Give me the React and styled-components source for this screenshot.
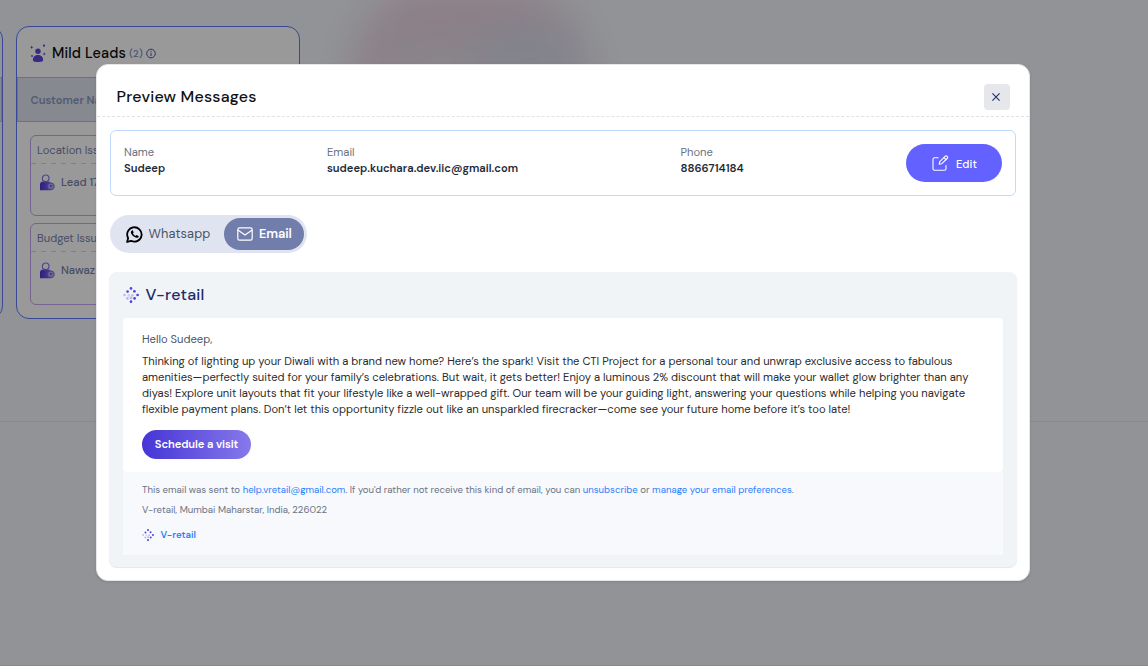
import React from "react";
import styled, { createGlobalStyle } from "styled-components";

const Global = createGlobalStyle`
  *, *::before, *::after { box-sizing: border-box; }
  body { margin: 0; background: #f3f6fb; font-family: "DM Sans", Inter, sans-serif; overflow: hidden; }
`;

/* ---------- page behind the dialog ---------- */
const Page = styled.div`
  position: relative;
  height: 666px;
  overflow: hidden;
  background: #f3f6fb;
`;
const Board = styled.section`
  display: flex;
  align-items: flex-start;
  gap: 13px;
  height: 422px;
  padding-top: 26px;
  border-bottom: 1px solid #e1e4e9;
`;
const Summary = styled.section`
  height: 244px;
  border-bottom: 1px solid #e1e4e9;
`;
const Column = styled.article`
  flex: none;
  width: 284px;
  height: 293px;
  margin-left: ${(p) => (p.$scrolled ? "-281px" : "0")};
  border: 1px solid #5f78ff;
  border-radius: 13px;
  background: ${(p) => (p.$scrolled ? "#f3f6fb" : "#fff")};
  overflow: hidden;
`;
const ColumnTitle = styled.h2`
  display: flex;
  align-items: center;
  height: 50px;
  margin: 0;
  padding: 2px 0 0 13px;
  font-size: 14.4px;
  font-weight: 500;
  letter-spacing: 0.17px;
  color: #0c0c0e;
`;
const TitleText = styled.span`
  margin: 0 3px 0 5px;
`;
const Count = styled.span`
  margin-right: 3px;
  padding-top: 1px;
  font-size: 9.6px;
  font-weight: 500;
  letter-spacing: 0.3px;
  color: #7484bd;
`;
const ColumnHead = styled.div`
  display: flex;
  align-items: center;
  height: 45px;
  padding-left: 12.5px;
  border: 1px solid #b4bddf;
  background: #dfe7f1;
  font-size: 11.2px;
  font-weight: 600;
  color: #8b95c4;
`;
const Issues = styled.div`
  display: flex;
  flex-direction: column;
  gap: 7px;
  padding: 13px;
`;
const Issue = styled.div`
  height: ${(p) => p.$height}px;
  border: 1px solid #caa2f0;
  border-radius: 6px;
  font-size: 11.2px;
  color: #7781aa;
`;
const IssueName = styled.div`
  height: 28px;
  padding-left: 6px;
  line-height: 29px;
  background: repeating-linear-gradient(90deg, #d3d5dc 0 5px, transparent 5px 10px) bottom / 100% 1px no-repeat;
`;
const Lead = styled.div`
  display: flex;
  align-items: center;
  gap: 6px;
  height: 36px;
  padding-left: 8px;
  font-weight: 500;
`;
const Glow = styled.div`
  position: absolute;
  left: 348px;
  top: -10px;
  width: 244px;
  height: 200px;
  border-radius: 84px;
  filter: blur(18px);
  background:
    radial-gradient(circle at 74% 40%, #d3deec 0, transparent 36%),
    radial-gradient(circle at 38% 44%, #e3e3e6 0, transparent 32%),
    linear-gradient(180deg, #f0c9d8 0, #e6d8e6 24%, #ebdae0 60%);
`;
const Backdrop = styled.div`
  position: absolute;
  inset: 0;
  display: flex;
  justify-content: center;
  align-items: flex-start;
  padding: 64px 22px 0 0;
  background: rgba(0, 0, 0, 0.4);
`;

/* ---------- dialog ---------- */
const Dialog = styled.div`
  width: 934px;
  height: 517px;
  border: 1px solid #e5e7eb;
  border-radius: 12px;
  background: #fff;
  overflow: hidden;
  box-shadow: 0 1px 3px rgba(0, 0, 0, 0.1);
`;
const DialogHead = styled.header`
  display: flex;
  justify-content: space-between;
  height: 52px;
  padding: 19px 19px 0 19.5px;
  border-bottom: 1px dashed #e0e2e6;
`;
const DialogTitle = styled.h1`
  margin: 0;
  font-size: 16px;
  font-weight: 500;
  line-height: 26px;
  letter-spacing: 0.21px;
  color: #101114;
`;
const CloseButton = styled.button`
  display: grid;
  place-items: center;
  width: 26px;
  height: 26px;
  padding: 0 2px 1px 0;
  border: 0;
  border-radius: 4px;
  background: #e5e7eb;
  color: #27326f;
`;
const DialogBody = styled.div`
  padding: 13px 12px 0;
`;
const Contact = styled.div`
  display: grid;
  grid-template-columns: 203px 353.5px 1fr auto;
  height: 66px;
  margin: 0 1px;
  padding: 13px;
  border: 1px solid #bedbff;
  border-radius: 6px;
`;
const Field = styled.div`
  font-size: 11.2px;
  line-height: 16px;
  color: #6a7282;
`;
const Value = styled.div`
  font-weight: 600;
  color: #1e2939;
`;
const EditButton = styled.button`
  display: flex;
  align-items: center;
  justify-content: center;
  gap: 7px;
  width: 96px;
  height: 38px;
  padding: 0 0 0 1px;
  border: 0;
  border-radius: 19px;
  background: #6361ff;
  font: 500 11.2px/18px "DM Sans", Inter, sans-serif;
  letter-spacing: 0.1px;
  color: #fff;
`;
const EditLabel = styled.span`
  padding-top: 2px;
`;
const Tabs = styled.div`
  display: flex;
  width: 197px;
  height: 38px;
  margin: 19px 1px;
  padding: 3px;
  border-radius: 19px;
  background: #e0e4f0;
`;
const Tab = styled.button`
  display: flex;
  align-items: center;
  gap: ${(p) => (p.$active ? "6.5px" : "6px")};
  width: ${(p) => (p.$active ? "80px" : "111px")};
  height: 32px;
  padding: 0 0 0 12.5px;
  border: 0;
  border-radius: 16px;
  background: ${(p) => (p.$active ? "#717daa" : "transparent")};
  font: ${(p) => (p.$active ? 600 : 400)} 12.8px/20px "DM Sans", Inter, sans-serif;
  letter-spacing: ${(p) => (p.$active ? "-0.1px" : "0.13px")};
  color: ${(p) => (p.$active ? "#fff" : "#4a5565")};
`;
const Mail = styled.div`
  height: 295px;
  padding: 0 14px;
  border-radius: 8px;
  background: #f0f4f7;
  box-shadow: 0 1px 1px rgba(0, 0, 0, 0.1);
`;
const Brand = styled.div`
  display: flex;
  align-items: center;
  gap: 6.5px;
  height: 46px;
  font-size: 16px;
  font-weight: 500;
  line-height: 20px;
  letter-spacing: 0.24px;
  color: #1f2a68;
`;
const BrandName = styled.span`
  padding-bottom: 1px;
`;
const Message = styled.div`
  height: 154px;
  padding: 13px 19px;
  border-radius: 4px;
  background: #fff;
  font-size: 11.2px;
  line-height: 16px;
`;
const Greeting = styled.p`
  margin: 0 0 6px;
  color: #4a5565;
`;
const Paragraph = styled.p`
  margin: 0;
  letter-spacing: 0.007px;
  color: #2b2b2d;
`;
const VisitButton = styled.button`
  display: block;
  width: 109px;
  height: 29px;
  margin-top: 13px;
  padding: 0 0 1px;
  border: 0;
  border-radius: 15px;
  background: linear-gradient(90deg, #4535d6, #8679ea);
  font: 600 11.2px/16px "DM Sans", Inter, sans-serif;
  letter-spacing: -0.09px;
  color: #fff;
`;
const MailFooter = styled.footer`
  display: flex;
  flex-direction: column;
  height: 83px;
  padding: 10px 19px 0;
  background: #f7f9fd;
  font-size: 9.6px;
  line-height: 16px;
  color: #6a7282;
`;
const FooterText = styled.p`
  margin: 0 0 4px;
  letter-spacing: 0.007px;
`;
const Link = styled.a`
  color: #2b7fff;
`;
const FooterBrand = styled.div`
  display: flex;
  align-items: center;
  gap: 6.5px;
  margin-top: 5px;
  font-weight: 600;
  color: #2b7fff;
`;

/* ---------- drawings ---------- */
const DOTS = [
  [8, 1.4, 1], [11.4, 4.3, 1], [14.6, 8, 1], [11.6, 11.4, 1], [8, 14.7, 1],
  [4.6, 4.6, 0.95], [1.5, 8, 0.3], [4.4, 11.4, 0.35], [8, 10.9, 0.35], [9.4, 8.3, 0.3], [5.8, 8.4, 0.2],
];
const BrandMark = ({ size }) => (
  <svg width={size} height={size} viewBox="0 0 16 16" fill="#5143dc">
    {DOTS.map(([x, y, o]) => (
      <circle key={x + "-" + y} cx={x} cy={y} r="1.35" opacity={o} />
    ))}
  </svg>
);
const LeadsIcon = () => (
  <svg width="17" height="19" viewBox="0 0 17 19" fill="#5b46dd">
    <circle cx="8" cy="7.3" r="2.7" />
    <path d="M2.9 15.8c0-3 2.2-4.9 5.1-4.9s5.1 1.9 5.1 4.9c0 1.7-1 2.2-5.1 2.2s-5.1-.5-5.1-2.2Z" />
    <path d="M1.7 1.5l.5 1.2 1.2.5-1.2.5-.5 1.2-.5-1.2L0 3.2l1.2-.5ZM14.2 8.2l.5 1.2 1.3.5-1.3.5-.5 1.2-.5-1.2-1.3-.5 1.3-.5Z" />
    <circle cx="14" cy="1.7" r="1.1" />
    <circle cx="2" cy="12" r="0.9" />
  </svg>
);
const InfoIcon = () => (
  <svg width="10" height="12" viewBox="0 0 10 12" fill="none" stroke="#4256b0">
    <circle cx="5" cy="6.5" r="4.3" />
    <path d="M5 5.8v3.2M5 3.9v1" />
  </svg>
);
const LeadIcon = () => (
  <svg width="16" height="17" viewBox="0 0 16 17">
    <defs>
      <linearGradient id="lead-body" x1="0" y1="0" x2="1" y2="0">
        <stop offset="0" stopColor="#4c38d6" />
        <stop offset="1" stopColor="#7c6bea" />
      </linearGradient>
    </defs>
    <path d="M1 16.2V10.500c0-2 1.400-3 3-3h5.200c1.500 0 2.800 1 3 2.600v6.100Z" fill="url(#lead-body)" />
    <circle cx="6.7" cy="4.3" r="3.3" fill="#fff" stroke="#8676ea" strokeWidth="1.2" />
    <circle cx="11.9" cy="12.3" r="3.4" fill="#b9aef6" stroke="#7261e6" strokeWidth="0.9" />
    <path d="M10.4 11.2h3l-1.500 2.400Z" fill="#5b45e0" />
  </svg>
);
const CloseIcon = () => (
  <svg width="8" height="8" viewBox="0 0 8 8" fill="none" stroke="currentColor" strokeWidth="1.15">
    <path d="M.4.4l7.2 7.2M7.6.4L.4 7.6" />
  </svg>
);
const EditIcon = () => (
  <svg width="17" height="17" viewBox="0 0 17 17" fill="none" stroke="#fff" strokeWidth="1.1" strokeLinecap="round" strokeLinejoin="round">
    <path d="M6.2 2.7H2.6C1.6 2.7 1 3.3 1 4.2v9.500c0 .9.6 1.500 1.600 1.500h9.800c1 0 1.600-.6 1.600-1.500v-3.200" />
    <path d="M7.2 9.2l.6-2.600 5.300-5.200c.6-.6 1.500-.6 2.100 0s.6 1.500 0 2.100L9.800 8.700Z" />
    <path d="M11.9 2.7l2 2" />
  </svg>
);
const WhatsappIcon = () => (
  <svg width="17" height="17" viewBox="0 0 17 17">
    <path d="M1.1 16l1.1-3.9A7.2 7.2 0 1 1 5 14.800Z" fill="none" stroke="#000" strokeWidth="1.8" strokeLinejoin="round" />
    <path d="M5.7 4.7c.5-.5 1.100-.4 1.300.1l.6 1.400c.1.300 0 .5-.4.9-.2.300-.1.500.1.800.6.9 1.300 1.500 2.200 1.900.3.1.5.1.7-.2.4-.5.600-.6.900-.4l1.400.7c.4.200.3.900-.1 1.300-.7.700-1.700.8-2.800.4-2.200-.8-3.800-2.400-4.600-4.300-.4-1.100-.1-2 .7-2.600Z" fill="#000" />
  </svg>
);
const MailIcon = () => (
  <svg width="16" height="14" viewBox="0 0 16 14" fill="none" stroke="#fff" strokeWidth="1.2" strokeLinecap="round" strokeLinejoin="round">
    <rect x="0.8" y="0.9" width="14.4" height="12.2" rx="1.7" />
    <path d="M1.2 3.3L8 7.9l6.8-4.6" />
  </svg>
);

const ISSUES = [
  { name: "Location Issue", lead: "Lead 17", height: 81 },
  { name: "Budget Issue", lead: "Nawaz", height: 82 },
];

export default function App() {
  return (
    <Page>
      <Global />
      <Glow />
      <Board>
        <Column $scrolled>
          <ColumnTitle />
          <ColumnHead />
        </Column>
        <Column>
          <ColumnTitle>
            <LeadsIcon />
            <TitleText>Mild Leads</TitleText>
            <Count>(2)</Count>
            <InfoIcon />
          </ColumnTitle>
          <ColumnHead>Customer Name</ColumnHead>
          <Issues>
            {ISSUES.map((issue) => (
              <Issue key={issue.name} $height={issue.height}>
                <IssueName>{issue.name}</IssueName>
                <Lead>
                  <LeadIcon />
                  {issue.lead}
                </Lead>
              </Issue>
            ))}
          </Issues>
        </Column>
      </Board>
      <Summary />
      <Backdrop>
        <Dialog role="dialog">
          <DialogHead>
            <DialogTitle>Preview Messages</DialogTitle>
            <CloseButton aria-label="Close">
              <CloseIcon />
            </CloseButton>
          </DialogHead>
          <DialogBody>
            <Contact>
              <Field>
                Name<Value>Sudeep</Value>
              </Field>
              <Field>
                Email<Value>sudeep.kuchara.dev.iic@gmail.com</Value>
              </Field>
              <Field>
                Phone<Value>8866714184</Value>
              </Field>
              <EditButton>
                <EditIcon />
                <EditLabel>Edit</EditLabel>
              </EditButton>
            </Contact>
            <Tabs>
              <Tab>
                <WhatsappIcon />
                Whatsapp
              </Tab>
              <Tab $active>
                <MailIcon />
                Email
              </Tab>
            </Tabs>
            <Mail>
              <Brand>
                <BrandMark size={16} />
                <BrandName>V-retail</BrandName>
              </Brand>
              <Message>
                <Greeting>Hello Sudeep,</Greeting>
                <Paragraph>
                  Thinking of lighting up your Diwali with a brand new home? Here’s the spark! Visit the CTI Project for
                  a personal tour and unwrap exclusive access to fabulous amenities—perfectly suited for your family’s
                  celebrations. But wait, it gets better! Enjoy a luminous 2% discount that will make your wallet glow
                  brighter than any diyas! Explore unit layouts that fit your lifestyle like a well-wrapped gift. Our
                  team will be your guiding light, answering your questions while helping you navigate flexible payment
                  plans. Don’t let this opportunity fizzle out like an unsparkled firecracker—come see your future home
                  before it’s too late!
                </Paragraph>
                <VisitButton>Schedule a visit</VisitButton>
              </Message>
              <MailFooter>
                <FooterText>
                  This email was sent to <Link>help.vretail@gmail.com</Link>. If you'd rather not receive this kind of
                  email, you can <Link>unsubscribe</Link> or <Link>manage your email preferences</Link>.
                </FooterText>
                <FooterText>V-retail, Mumbai Maharstar, India, 226022</FooterText>
                <FooterBrand>
                  <BrandMark size={12} />
                  V-retail
                </FooterBrand>
              </MailFooter>
            </Mail>
          </DialogBody>
        </Dialog>
      </Backdrop>
    </Page>
  );
}
